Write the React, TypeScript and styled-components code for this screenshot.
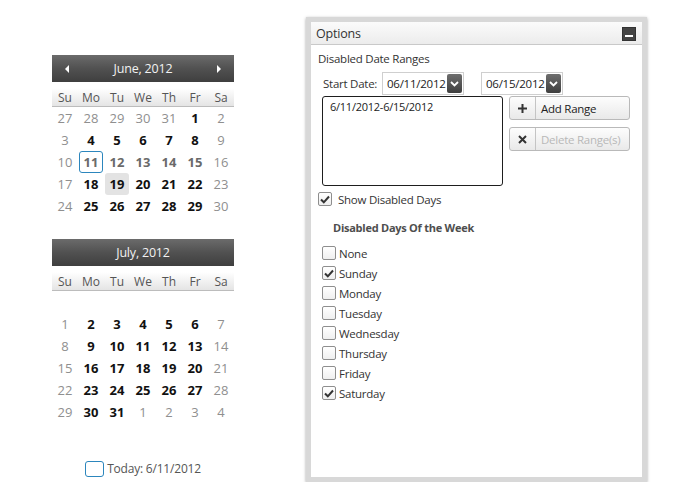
import React from 'react';
import styled, { createGlobalStyle } from 'styled-components';

const GlobalStyle = createGlobalStyle`
  body {
    margin: 0;
    background: #fff;
    font-family: 'Open Sans', 'Liberation Sans', sans-serif;
    color: #333;
  }
`;

const DAY_NAMES = ['Su', 'Mo', 'Tu', 'We', 'Th', 'Fr', 'Sa'];
const WEEK_DAYS = ['None', 'Sunday', 'Monday', 'Tuesday', 'Wednesday', 'Thursday', 'Friday', 'Saturday'];
const CHECKED_DAYS = ['Sunday', 'Saturday'];

const TODAY = new Date(2012, 5, 11);
const HOVER = new Date(2012, 5, 19);
const RANGE_START = new Date(2012, 5, 11);
const RANGE_END = new Date(2012, 5, 15);

type CellKind = 'muted' | 'range' | 'normal';

interface Cell {
  date: Date;
  kind: CellKind;
  today: boolean;
  hover: boolean;
}

const sameDay = (a: Date, b: Date) => a.getTime() === b.getTime();

// always shows at least one day of the previous month, like the original control
function buildWeeks(year: number, month: number): { cells: Cell[]; empty: boolean }[] {
  const first = new Date(year, month, 1);
  const lead = first.getDay() === 0 ? 7 : first.getDay();
  const start = new Date(year, month, 1 - lead);
  const weeks = [];
  for (let w = 0; w < 6; w++) {
    const cells: Cell[] = [];
    let inMonth = 0;
    for (let d = 0; d < 7; d++) {
      const date = new Date(start.getFullYear(), start.getMonth(), start.getDate() + w * 7 + d);
      const own = date.getMonth() === month;
      if (own) inMonth++;
      const weekend = date.getDay() === 0 || date.getDay() === 6;
      let kind: CellKind = 'normal';
      if (!own || weekend) kind = 'muted';
      else if (date >= RANGE_START && date <= RANGE_END) kind = 'range';
      cells.push({ date, kind, today: sameDay(date, TODAY), hover: sameDay(date, HOVER) });
    }
    weeks.push({ cells, empty: inMonth === 0 });
  }
  return weeks;
}

const Page = styled.div`
  display: flex;
  align-items: flex-start;
  padding: 17px 0 0 52px;
`;

const LeftColumn = styled.div`
  width: 182px;
  margin-top: 38px;
  display: flex;
  flex-direction: column;
`;

const CalendarBox = styled.div`
  display: flex;
  flex-direction: column;
`;

const CalHeader = styled.div`
  height: 27px;
  display: flex;
  align-items: center;
  justify-content: space-between;
  padding: 0 11px;
  background: linear-gradient(#6b6b6b, #515151 50%, #3f3f3f);
  color: #f2f2f2;
  font-size: 12.5px;
  letter-spacing: -0.2px;
`;

const Arrow = styled.svg<{ $hidden?: boolean }>`
  width: 8px;
  height: 10px;
  visibility: ${(p) => (p.$hidden ? 'hidden' : 'visible')};
`;

const DayNameRow = styled.div`
  margin-top: 6px;
  height: 18px;
  display: grid;
  grid-template-columns: repeat(7, 1fr);
  align-items: center;
  background: linear-gradient(#ffffff, #e4e4e4);
  border-bottom: 1px solid #bcbcbc;
  color: #555;
  font-size: 12px;
  text-align: center;
`;

const WeekRow = styled.div<{ $empty: boolean }>`
  height: 22px;
  display: grid;
  grid-template-columns: repeat(7, 1fr);
  visibility: ${(p) => (p.$empty ? 'hidden' : 'visible')};
`;

const DayCell = styled.div<{ $kind: CellKind; $today: boolean; $hover: boolean }>`
  display: flex;
  align-items: center;
  justify-content: center;
  font-size: 13px;
  font-weight: ${(p) => (p.$kind === 'muted' ? 400 : 700)};
  color: ${(p) => (p.$kind === 'muted' ? '#8f8f8f' : p.$kind === 'range' || p.$today ? '#6a6a6a' : '#111')};
  background: ${(p) => (p.$hover ? '#e3e3e3' : 'transparent')};
  border: 1px solid ${(p) => (p.$today ? '#2c86bd' : 'transparent')};
  border-radius: 3px;
  margin: 0 1px;
`;

const TodayBar = styled.div`
  margin-top: 37px;
  display: flex;
  align-items: center;
  justify-content: center;
  gap: 3px;
  font-size: 12px;
  letter-spacing: -0.2px;
  color: #555;
`;

const TodayBox = styled.span`
  width: 17px;
  height: 14px;
  border: 1px solid #2c86bd;
  border-radius: 3px;
`;

const Panel = styled.div`
  margin-left: 72px;
  width: 341px;
  height: 465px;
  box-sizing: border-box;
  border: 5px solid #d8d8d8;
  box-shadow: 0 1px 3px rgba(0, 0, 0, 0.35);
  background: #fff;
  display: flex;
  flex-direction: column;
`;

const PanelHeader = styled.div`
  height: 22px;
  display: flex;
  align-items: center;
  justify-content: space-between;
  padding: 0 6px 0 5px;
  background: linear-gradient(#fbfbfb, #ececec);
  border-bottom: 1px solid #c9c9c9;
  font-size: 12.5px;
  letter-spacing: -0.2px;
  color: #333;
`;

const MinButton = styled.div`
  width: 14px;
  height: 14px;
  margin-top: 2px;
  background: #444;
  border: 1px solid #333;
  box-sizing: border-box;
  display: flex;
  align-items: flex-end;
  justify-content: center;
  padding-bottom: 3px;
  &::after {
    content: '';
    width: 8px;
    height: 2px;
    background: #fff;
  }
`;

const PanelBody = styled.div`
  padding: 6px 7px;
  display: flex;
  flex-direction: column;
  font-size: 11.5px;
  letter-spacing: -0.25px;
`;

const SectionTitle = styled.div`
  height: 16px;
  line-height: 16px;
  color: #333;
`;

const DateRow = styled.div`
  margin-top: 5px;
  padding-left: 5px;
  display: flex;
  align-items: center;
  height: 23px;
`;

const Label = styled.span`
  width: 59px;
  white-space: nowrap;
  color: #333;
`;

const DateInput = styled.div<{ $gap?: number }>`
  width: 82px;
  height: 23px;
  box-sizing: border-box;
  border: 1px solid #cfcfcf;
  display: flex;
  align-items: center;
  justify-content: space-between;
  padding: 0 1px 0 4px;
  margin-left: ${(p) => p.$gap ?? 0}px;
  color: #222;
`;

const DropButton = styled.div`
  width: 15px;
  height: 19px;
  border-radius: 2px;
  background: linear-gradient(#6e6e6e, #3e3e3e);
  display: flex;
  align-items: center;
  justify-content: center;
`;

const RangeRow = styled.div`
  margin-top: 1px;
  display: flex;
  align-items: flex-start;
  padding-left: 4px;
`;

const ListBox = styled.div`
  width: 181px;
  height: 90px;
  box-sizing: border-box;
  border: 1px solid #1e1e1e;
  border-radius: 3px;
  padding: 2px 7px;
  color: #222;
  font-size: 11px;
`;

const ButtonColumn = styled.div`
  margin-left: 6px;
  display: flex;
  flex-direction: column;
  gap: 7px;
`;

const ActionButton = styled.div<{ $disabled?: boolean }>`
  width: 121px;
  height: 24px;
  box-sizing: border-box;
  border: 1px solid #b9b9b9;
  border-radius: 3px;
  background: linear-gradient(#fdfdfd, #e9e9e9);
  display: flex;
  align-items: center;
  color: ${(p) => (p.$disabled ? '#b8b8b8' : '#222')};
`;

const ButtonIcon = styled.span`
  width: 25px;
  height: 100%;
  border-right: 1px solid #c4c4c4;
  display: flex;
  align-items: center;
  justify-content: center;
  margin-right: 5px;
`;

const CheckRow = styled.label<{ $indent?: number; $height?: number; $gap?: number }>`
  display: flex;
  align-items: center;
  gap: ${(p) => p.$gap ?? 6}px;
  height: ${(p) => p.$height ?? 20}px;
  padding-left: ${(p) => p.$indent ?? 0}px;
  color: #333;
`;

const Box = styled.span`
  width: 14px;
  height: 14px;
  box-sizing: border-box;
  border: 1px solid #8e8e8e;
  border-radius: 2px;
  background: linear-gradient(#ffffff, #efefef);
  display: flex;
  align-items: center;
  justify-content: center;
`;

const SubTitle = styled.div`
  margin-top: 8px;
  padding-left: 15px;
  height: 16px;
  line-height: 16px;
  font-size: 11px;
  font-weight: 700;
  color: #4e4e4e;
`;

const DayList = styled.div`
  margin-top: 7px;
  display: flex;
  flex-direction: column;
`;

const Check = () => (
  <svg width="10" height="9" viewBox="0 0 10 9">
    <path d="M1 4.5 L3.8 7.3 L9 1.5" fill="none" stroke="#333" strokeWidth="2" />
  </svg>
);

const Checkbox: React.FC<{ checked: boolean }> = ({ checked }) => <Box>{checked && <Check />}</Box>;

const Calendar: React.FC<{ year: number; month: number; title: string; arrows?: boolean }> = ({
  year,
  month,
  title,
  arrows,
}) => {
  const weeks = buildWeeks(year, month);
  return (
    <CalendarBox>
      <CalHeader>
        <Arrow viewBox="0 0 8 10" $hidden={!arrows}>
          <polygon points="6,1 2,5 6,9" fill="#fff" />
        </Arrow>
        <span>{title}</span>
        <Arrow viewBox="0 0 8 10" $hidden={!arrows}>
          <polygon points="2,1 6,5 2,9" fill="#fff" />
        </Arrow>
      </CalHeader>
      <DayNameRow>
        {DAY_NAMES.map((d) => (
          <span key={d}>{d}</span>
        ))}
      </DayNameRow>
      {weeks.map((week, i) => (
        <WeekRow key={i} $empty={week.empty}>
          {week.cells.map((c) => (
            <DayCell key={c.date.getTime()} $kind={c.kind} $today={c.today} $hover={c.hover}>
              {c.date.getDate()}
            </DayCell>
          ))}
        </WeekRow>
      ))}
    </CalendarBox>
  );
};

const Chevron = () => (
  <svg width="9" height="6" viewBox="0 0 9 6">
    <path d="M1 1 L4.5 4.5 L8 1" fill="none" stroke="#fff" strokeWidth="1.8" />
  </svg>
);

export default function App() {
  return (
    <>
      <GlobalStyle />
      <Page>
        <LeftColumn>
          <Calendar year={2012} month={5} title="June, 2012" arrows />
          <Calendar year={2012} month={6} title="July, 2012" />
          <TodayBar>
            <TodayBox />
            <span>Today: 6/11/2012</span>
          </TodayBar>
        </LeftColumn>

        <Panel>
          <PanelHeader>
            <span>Options</span>
            <MinButton />
          </PanelHeader>
          <PanelBody>
            <SectionTitle>Disabled Date Ranges</SectionTitle>
            <DateRow>
              <Label>Start Date:</Label>
              <DateInput>
                06/11/2012
                <DropButton>
                  <Chevron />
                </DropButton>
              </DateInput>
              <DateInput $gap={17}>
                06/15/2012
                <DropButton>
                  <Chevron />
                </DropButton>
              </DateInput>
            </DateRow>
            <RangeRow>
              <ListBox>6/11/2012-6/15/2012</ListBox>
              <ButtonColumn>
                <ActionButton>
                  <ButtonIcon>
                    <svg width="9" height="9" viewBox="0 0 9 9">
                      <path d="M4.5 0 V9 M0 4.5 H9" stroke="#333" strokeWidth="2" />
                    </svg>
                  </ButtonIcon>
                  Add Range
                </ActionButton>
                <ActionButton $disabled>
                  <ButtonIcon>
                    <svg width="9" height="9" viewBox="0 0 9 9">
                      <path d="M1 1 L8 8 M8 1 L1 8" stroke="#333" strokeWidth="2" />
                    </svg>
                  </ButtonIcon>
                  Delete Range(s)
                </ActionButton>
              </ButtonColumn>
            </RangeRow>
            <CheckRow $height={26}>
              <Checkbox checked />
              Show Disabled Days
            </CheckRow>
            <SubTitle>Disabled Days Of the Week</SubTitle>
            <DayList>
              {WEEK_DAYS.map((d) => (
                <CheckRow key={d} $indent={4} $height={20} $gap={3}>
                  <Checkbox checked={CHECKED_DAYS.includes(d)} />
                  {d}
                </CheckRow>
              ))}
            </DayList>
          </PanelBody>
        </Panel>
      </Page>
    </>
  );
}
